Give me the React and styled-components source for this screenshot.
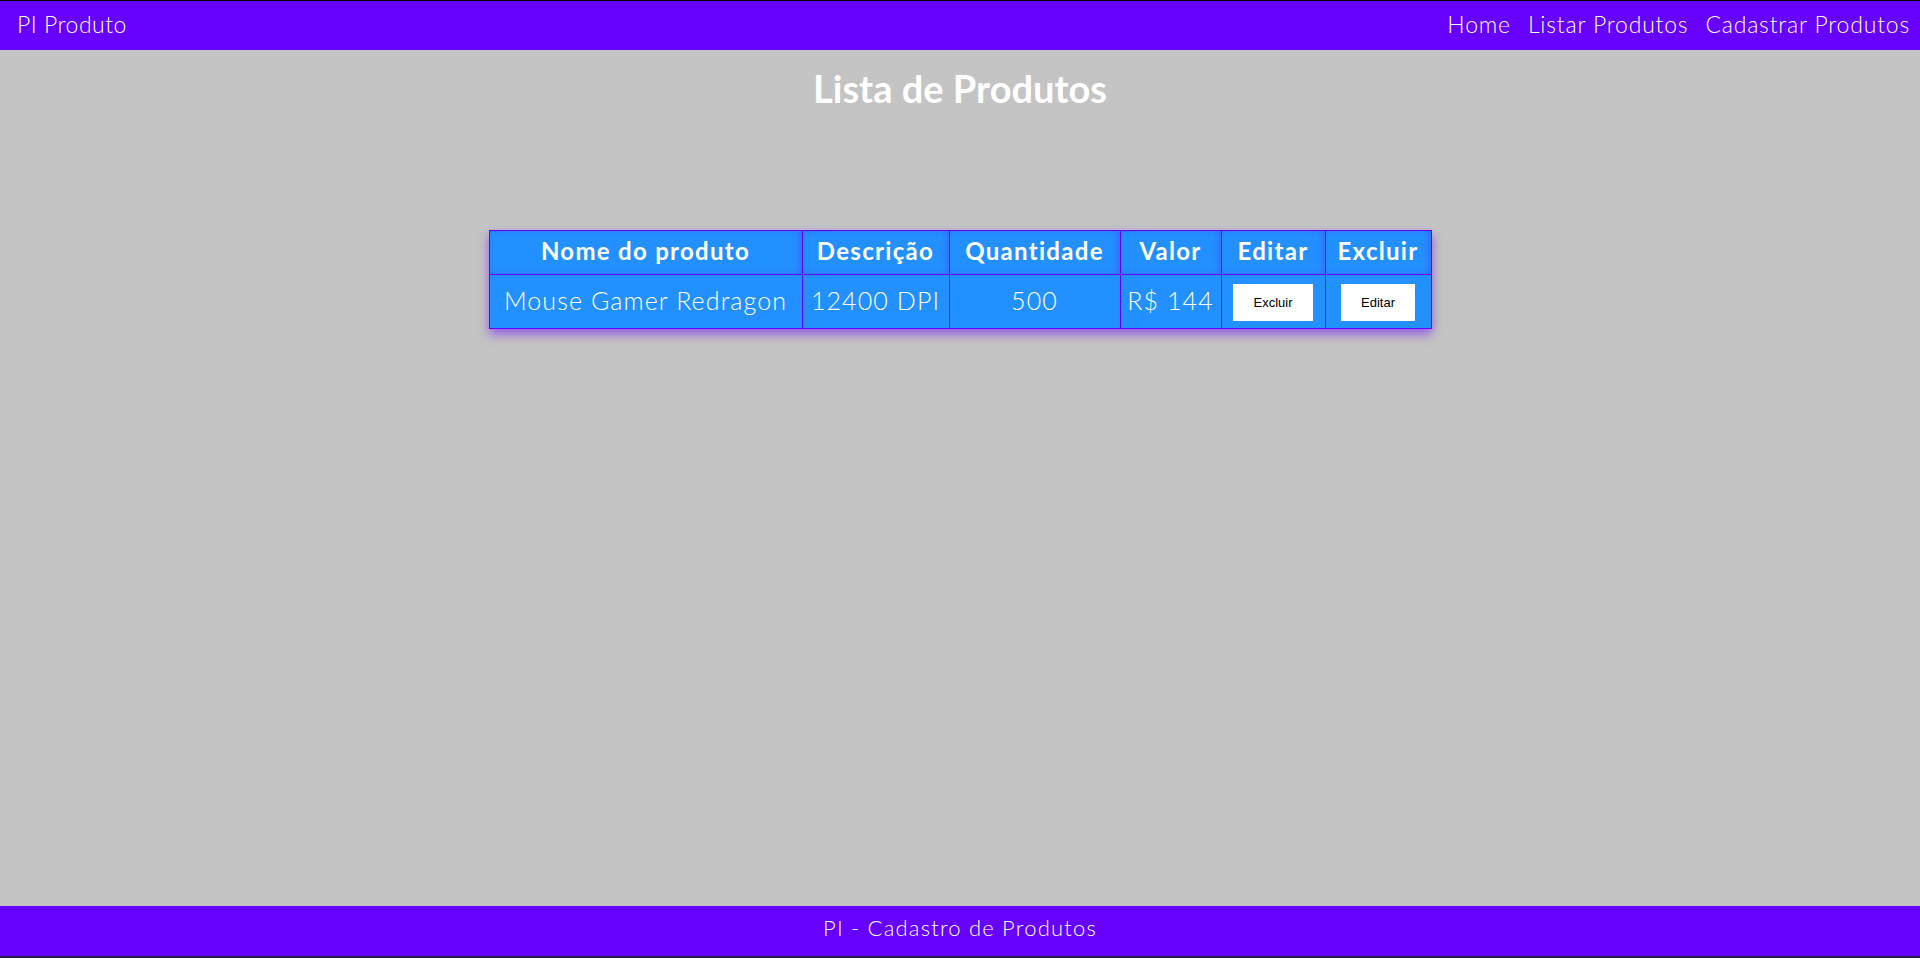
import styled, { createGlobalStyle } from "styled-components";

const GlobalStyle = createGlobalStyle`
  html, body {
    margin: 0;
    padding: 0;
    height: 100%;
  }
  body {
    font-family: Lato, "Open Sans", sans-serif;
    background: #c4c4c4;
    overflow: hidden;
  }
`;

const produtos = [
  { nome: "Mouse Gamer Redragon", descricao: "12400 DPI", quantidade: 500, valor: "R$ 144" },
];

const colunas = [
  { titulo: "Nome do produto", largura: 313 },
  { titulo: "Descrição", largura: 147 },
  { titulo: "Quantidade", largura: 171 },
  { titulo: "Valor", largura: 101 },
  { titulo: "Editar", largura: 104 },
  { titulo: "Excluir", largura: 106 },
];

function App() {
  return (
    <Page>
      <GlobalStyle />
      <Topbar>
        <Brand>PI Produto</Brand>
        <Nav>
          <NavLink>Home</NavLink>
          <NavLink>Listar Produtos</NavLink>
          <NavLink>Cadastrar Produtos</NavLink>
        </Nav>
      </Topbar>
      <Main>
        <Title>Lista de Produtos</Title>
        <Table>
          <thead>
            <tr>
              {colunas.map((c) => (
                <Th key={c.titulo} $w={c.largura}>
                  {c.titulo}
                </Th>
              ))}
            </tr>
          </thead>
          <tbody>
            {produtos.map((p) => (
              <tr key={p.nome}>
                <Td>{p.nome}</Td>
                <Td>{p.descricao}</Td>
                <Td>{p.quantidade}</Td>
                <Td>{p.valor}</Td>
                <ActionCell>
                  <Button>Excluir</Button>
                </ActionCell>
                <ActionCell>
                  <Button>Editar</Button>
                </ActionCell>
              </tr>
            ))}
          </tbody>
        </Table>
      </Main>
      <Footer>PI - Cadastro de Produtos</Footer>
      <BottomStrip />
    </Page>
  );
}

export default App;

const Page = styled.div`
  height: 100vh;
  display: flex;
  flex-direction: column;
  border-top: 1px solid #000;
  box-sizing: border-box;
`;

const Topbar = styled.header`
  height: 49px;
  box-sizing: border-box;
  background: #6600ff;
  display: flex;
  align-items: center;
  justify-content: space-between;
  padding: 0 10px 3px 17px;
  color: #fff;
  flex-shrink: 0;
`;

const Brand = styled.span`
  font-size: 23px;
  font-weight: 300;
  letter-spacing: 0.5px;
`;

const Nav = styled.nav`
  display: flex;
  gap: 17px;
`;

const NavLink = styled.a`
  font-size: 23px;
  font-weight: 300;
  letter-spacing: 0.8px;
  color: #fff;
  cursor: pointer;
`;

const Main = styled.main`
  flex: 1;
  display: flex;
  flex-direction: column;
  align-items: center;
`;

const Title = styled.h1`
  margin: 11px 0 0;
  font-size: 38px;
  font-weight: 700;
  color: #fff;
  line-height: 54px;
`;

const Table = styled.table`
  margin-top: 115px;
  border-collapse: collapse;
  background: #2291ff;
  box-shadow: 0 5px 10px rgba(102, 0, 255, 0.55);
  border: 1px solid #6600ff;
`;

const Th = styled.th`
  box-sizing: border-box;
  width: ${(p) => p.$w}px;
  height: 44px;
  padding: 0 0 4px;
  border: 1px solid #6600ff;
  color: #fff;
  font-size: 24px;
  font-weight: 700;
  letter-spacing: 1.3px;
  text-align: center;
  box-shadow: inset -3px 0 6px rgba(102, 0, 255, 0.25);
`;

const Td = styled.td`
  box-sizing: border-box;
  height: 54px;
  padding: 0 0 4px;
  border: 1px solid #6600ff;
  color: #fff;
  font-size: 25px;
  font-weight: 300;
  letter-spacing: 1.1px;
  text-align: center;
`;

const ActionCell = styled(Td)`
  padding: 0;
`;

const Button = styled.button`
  height: 37px;
  padding: 0 20px;
  border: none;
  background: #fff;
  color: #000;
  font-family: "Liberation Sans", Arial, sans-serif;
  font-size: 13px;
  letter-spacing: 0;
  cursor: pointer;
`;

const Footer = styled.footer`
  height: 50px;
  box-sizing: border-box;
  padding-bottom: 7px;
  background: #6600ff;
  color: #fff;
  display: flex;
  align-items: center;
  justify-content: center;
  font-size: 22px;
  font-weight: 300;
  letter-spacing: 1.2px;
  flex-shrink: 0;
`;

const BottomStrip = styled.div`
  height: 2px;
  background: #1e2142;
  flex-shrink: 0;
`;
